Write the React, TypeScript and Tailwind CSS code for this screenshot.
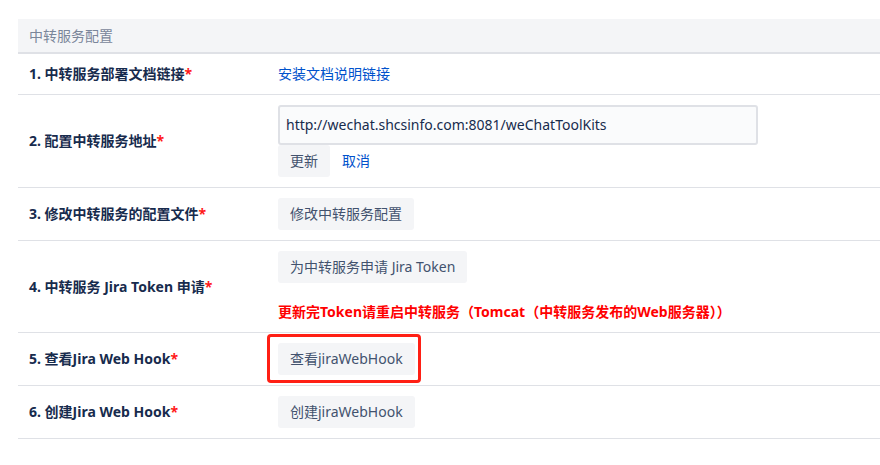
import React from "react";

const font = { fontFamily: '"Segoe UI", "Noto Sans", "Noto Sans CJK SC", sans-serif' };

function Label({ children }: { children: React.ReactNode }) {
  return (
    <div className="w-[260px] shrink-0 pl-[11px] pr-3 flex items-center text-[14px] leading-5 font-bold text-[#172b4d]">
      <span>
        {children}
        <span className="text-[#ff1a1a]">*</span>
      </span>
    </div>
  );
}

function Btn({ children }: { children: React.ReactNode }) {
  return (
    <button className="h-8 px-3 rounded-[3px] bg-[#f4f5f7] text-[14px] leading-5 text-[#42526e] whitespace-nowrap">
      {children}
    </button>
  );
}

function Row({ children }: { children: React.ReactNode }) {
  return <div className="flex border-b border-[#dfe1e6] py-[10px]">{children}</div>;
}

export default function App() {
  return (
    <div className="bg-white min-h-[465px] pt-[19px] pl-[18px]" style={font}>
      <div className="w-[880px]">
        <div className="h-[35px] bg-[#f4f5f7] border-b-2 border-[#dfe1e6] pl-[11px] flex items-center text-[14px] leading-5 text-[#7a869a]">
          中转服务配置
        </div>
        <Row>
          <Label>1. 中转服务部署文档链接</Label>
          <div className="flex items-center text-[14px] leading-5 text-[#0052cc]">安装文档说明链接</div>
        </Row>
        <Row>
          <Label>2. 配置中转服务地址</Label>
          <div className="flex flex-col">
            <div className="w-[480px] h-10 border-2 border-[#dfe1e6] bg-[#fafbfc] rounded-[3px] px-[6px] flex items-center text-[14px] leading-5 text-[#172b4d]">
              http://wechat.shcsinfo.com:8081/weChatToolKits
            </div>
            <div className="flex">
              <Btn>更新</Btn>
              <button className="h-8 px-3 text-[14px] leading-5 text-[#0052cc]">取消</button>
            </div>
          </div>
        </Row>
        <Row>
          <Label>3. 修改中转服务的配置文件</Label>
          <div className="flex items-center">
            <Btn>修改中转服务配置</Btn>
          </div>
        </Row>
        <Row>
          <Label>4. 中转服务 Jira Token 申请</Label>
          <div className="flex flex-col items-start">
            <Btn>为中转服务申请 Jira Token</Btn>
            <div className="mt-[19px] text-[14px] leading-5 font-bold text-[#ff0000] whitespace-nowrap">
              更新完Token请重启中转服务（Tomcat（中转服务发布的Web服务器））
            </div>
          </div>
        </Row>
        <Row>
          <Label>5. 查看Jira Web Hook</Label>
          <div className="flex items-center relative">
            <Btn>查看jiraWebHook</Btn>
            <div className="absolute left-[-11px] top-[-9px] w-[154px] h-[49px] border-[3px] border-[#ff1f14] rounded-[4px] pointer-events-none" />
          </div>
        </Row>
        <Row>
          <Label>6. 创建Jira Web Hook</Label>
          <div className="flex items-center">
            <Btn>创建jiraWebHook</Btn>
          </div>
        </Row>
      </div>
    </div>
  );
}
